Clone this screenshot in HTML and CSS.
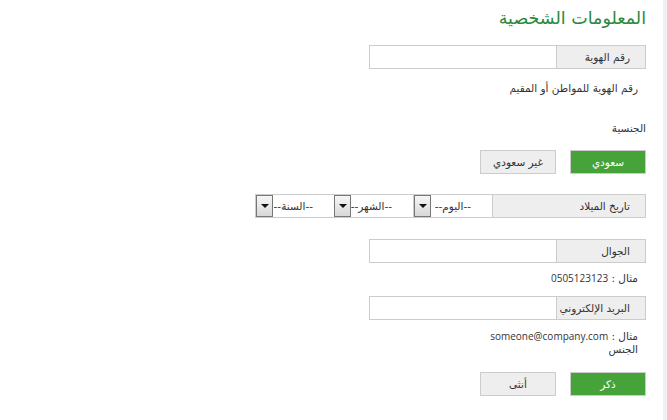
FILE: index.html
```html
<!DOCTYPE html>
<html lang="ar" dir="rtl">
<head>
<meta charset="utf-8">
<link rel="stylesheet" href="styles.css">
</head>
<body>
<div class="layout">
  <div class="strip"></div>
  <main class="page">
    <h1 class="title">المعلومات الشخصية</h1>

    <div class="group g-id">
      <span class="addon">رقم الهوية</span>
      <span class="field"></span>
    </div>
    <p class="help h-id">رقم الهوية للمواطن أو المقيم</p>

    <p class="label l-nat">الجنسية</p>
    <div class="btns b-nat">
      <span class="btn on">سعودي</span>
      <span class="btn">غير سعودي</span>
    </div>

    <div class="group g-date">
      <span class="addon wide">تاريخ الميلاد</span>
      <span class="sel">--اليوم--<i class="arrow"></i></span>
      <span class="sel">--الشهر--<i class="arrow"></i></span>
      <span class="sel">--السنة--<i class="arrow"></i></span>
    </div>

    <div class="group g-mob">
      <span class="addon">الجوال</span>
      <span class="field"></span>
    </div>
    <p class="help h-mob">مثال : <span class="latin">0505123123</span></p>

    <div class="group g-mail">
      <span class="addon">البريد الإلكتروني</span>
      <span class="field"></span>
    </div>
    <p class="help h-mail">مثال : <span class="latin">someone@company.com</span></p>
    <p class="help h-sex">الجنس</p>
    <div class="btns b-sex">
      <span class="btn on">ذكر</span>
      <span class="btn">أنثى</span>
    </div>
  </main>
</div>
</body>
</html>
```

FILE: styles.css
```css
html, body {
  margin: 0;
  padding: 0;
  background: #fff;
  height: 100%;
}
body {
  font-family: "DejaVu Sans", "Noto Sans", sans-serif;
  font-size: 10.5px;
  color: #333;
}
.latin {
  font-family: "Open Sans", "DejaVu Sans", sans-serif;
  font-size: 10px;
  line-height: 14px;
}
.layout {
  display: flex;
  flex-direction: row;
  height: 420px;
  overflow: hidden;
}
.strip {
  width: 4px;
  flex: none;
  background: #f0f0f0;
}
.page {
  flex: none;
  width: 391px;
  margin-right: 17px;
  display: flex;
  flex-direction: column;
  align-items: stretch;
}
.title {
  margin: 6px 0 0 0;
  height: 24px;
  line-height: 24px;
  font-size: 17.5px;
  font-weight: normal;
  color: #2a8a3c;
}
.group {
  display: flex;
  flex-direction: row;
  height: 24px;
  width: 277px;
}
.addon {
  box-sizing: border-box;
  width: 90px;
  flex: none;
  background: #eee;
  border: 1px solid #ccc;
  line-height: 22px;
  padding-right: 15px;
  white-space: nowrap;
}
.addon.wide { width: 154px; }
.field {
  box-sizing: border-box;
  flex: 1;
  border: 1px solid #ccc;
  border-right: none;
  background: #fff;
}
.g-id { margin-top: 15px; }
.help {
  margin: 0;
  padding-right: 8px;
  height: 14px;
  line-height: 14px;
}
.h-id { margin-top: 12px; }
.label { margin: 0; height: 14px; line-height: 14px; }
.l-nat { margin-top: 26px; }
.btns {
  display: flex;
  flex-direction: row;
  gap: 14px;
}
.b-nat { margin-top: 15px; }
.btn {
  box-sizing: border-box;
  width: 76px;
  height: 24px;
  line-height: 22px;
  text-align: center;
  background: #eee;
  border: 1px solid #ccc;
  color: #333;
}
.btn.on {
  background: #46a33a;
  border-color: #ccc;
  color: #fff;
}
.g-date {
  width: 391px;
  margin-top: 20px;
  height: 24px;
}
.sel {
  box-sizing: border-box;
  width: 79px;
  flex: none;
  display: flex;
  flex-direction: row;
  align-items: center;
  border: 1px solid #ccc;
  border-right: none;
  padding-right: 21px;
  line-height: 22px;
  background: #fff;
  white-space: nowrap;
}
.arrow {
  margin-right: auto;
  box-sizing: border-box;
  width: 17px;
  height: 22px;
  flex: none;
  border: 1px solid #777;
  background: linear-gradient(#f6f6f6, #d8d8d8);
  position: relative;
}
.arrow::after {
  content: "";
  position: absolute;
  left: 4px;
  top: 8px;
  border-left: 4px solid transparent;
  border-right: 4px solid transparent;
  border-top: 4px solid #111;
}
.g-mob { margin-top: 21px; }
.h-mob { margin-top: 8px; }
.g-mail { margin-top: 11px; }
.h-mail { margin-top: 9px; }
.h-sex { margin-top: -1px; }
.b-sex { margin-top: 16px; }
```
